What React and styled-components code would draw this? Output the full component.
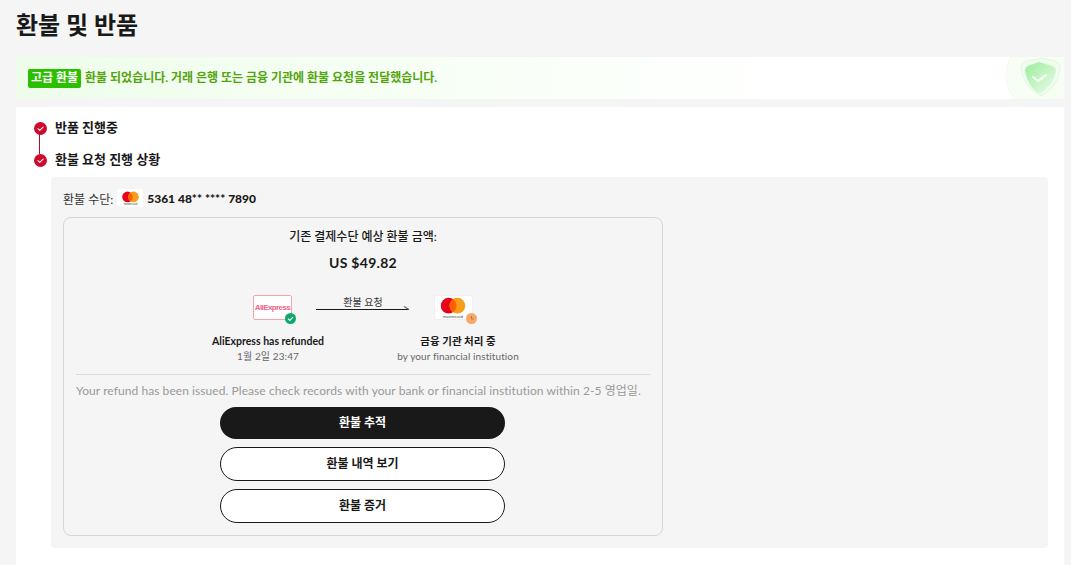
import React from "react";
import styled, { createGlobalStyle } from "styled-components";

const Global = createGlobalStyle`
  html, body { margin: 0; padding: 0; background: #f5f5f5; overflow: hidden; height: 565px; }
  body { font-family: "Lato", "Noto Sans CJK KR", sans-serif; color: #191919; }
  * { box-sizing: border-box; }
`;
const Page = styled.div`
  padding: 0 7px 0 16px;
  height: 565px;
  overflow: hidden;
`;
const Title = styled.h1`
  margin: 0;
  height: 57px;
  padding-top: 8px;
  font-size: 24px;
  line-height: 34px;
  font-weight: 700;
`;
const Banner = styled.div`
  position: relative;
  height: 42px;
  padding-left: 12px;
  display: flex;
  align-items: center;
  gap: 4px;
  overflow: hidden;
  background: linear-gradient(90deg, #edfdea 0%, #f6fff4 35%, #ffffff 75%, #ffffff 100%);
  font-size: 12px;
  font-weight: 700;
  color: #53a30f;
`;
const Badge = styled.span`
  background: #2bbf00;
  color: #fff;
  border-radius: 2px;
  height: 19px;
  line-height: 17px;
  padding: 0 3px;
  font-size: 12px;
`;
const BannerText = styled.span`
  position: relative;
  top: -2px;
`;
const ShieldWrap = styled.svg`
  position: absolute;
  right: 0;
  top: 0;
  filter: blur(0.4px);
`;
const Card = styled.div`
  margin-top: 8px;
  background: #fff;
  height: 460px;
  padding: 7px 16px 0 18px;
`;
const StepRow = styled.div`
  position: relative;
  display: flex;
  align-items: center;
  gap: 8px;
  height: 24px;
  margin-bottom: 8px;
  font-size: 13px;
  font-weight: 700;
`;
const StepDot = styled.span`
  width: 13px;
  height: 13px;
  display: flex;
  flex: none;
  margin-top: 5px;
`;
const Connector = styled.span`
  position: absolute;
  left: 5px;
  top: 19px;
  width: 1px;
  height: 21px;
  background: #a5122b;
`;
const Panel = styled.div`
  margin: -1px 0 0 17px;
  height: 371px;
  width: 997px;
  background: #f5f5f5;
  border-radius: 4px;
  padding: 12px;
`;
const MethodRow = styled.div`
  display: flex;
  align-items: center;
  height: 18px;
  font-size: 12px;
  color: #333;
  gap: 4px;
`;
const CardNumber = styled.span`
  font-weight: 900;
  font-size: 12px;
  color: #191919;
`;
const CardChip = styled.span`
  width: 26px;
  height: 18px;
  background: #fff;
  border-radius: 2px;
  display: flex;
  align-items: center;
  justify-content: center;
`;
const Box = styled.div`
  margin-top: 10px;
  width: 600px;
  height: 319px;
  border: 1px solid #d6d6d6;
  border-radius: 8px;
  padding: 0 12px;
  display: flex;
  flex-direction: column;
  align-items: center;
`;
const BoxHeading = styled.div`
  margin-top: 10px;
  font-size: 12px;
  line-height: 18px;
  color: #191919;
  font-weight: 500;
`;
const Amount = styled.div`
  margin-top: 7px;
  font-size: 14px;
  line-height: 20px;
  font-weight: 700;
  letter-spacing: 0.3px;
`;
const Flow = styled.div`
  margin: 22px 0 0 144px;
  align-self: flex-start;
  display: flex;
  height: 71px;
`;
const Party = styled.div`
  width: 96px;
  display: flex;
  flex-direction: column;
  align-items: center;
`;
const LogoBox = styled.div`
  position: relative;
  width: 39px;
  height: 25px;
  margin-left: ${(p) => p.$shift}px;
  background: #fff;
  border-radius: 2px;
  border: 1px solid ${(p) => p.$edge};
  display: flex;
  align-items: center;
  justify-content: center;
`;
const AliText = styled.span`
  font-family: "Liberation Sans", sans-serif;
  font-size: 8px;
  letter-spacing: -0.6px;
  color: #f0638a;
  font-weight: 700;
`;
const StatusBadge = styled.span`
  position: absolute;
  right: -5px;
  bottom: -5px;
  width: 11px;
  height: 11px;
  display: flex;
`;
const PartyName = styled.div`
  margin-top: 14px;
  font-size: 10.5px;
  line-height: 14px;
  font-weight: 700;
  white-space: nowrap;
`;
const PartyNote = styled.div`
  margin-top: 1px;
  font-size: 10px;
  line-height: 14px;
  color: #666;
  white-space: nowrap;
  letter-spacing: 0.1px;
`;
const Arrow = styled.div`
  width: 94px;
  margin-top: 1px;
  display: flex;
  flex-direction: column;
  align-items: center;
  font-size: 10px;
  line-height: 12px;
  color: #333;
`;
const ArrowGlyph = styled.svg`
  display: block;
  margin-top: -2px;
`;
const Divider = styled.div`
  width: 100%;
  height: 1px;
  background: #dcdcdc;
  margin-top: 8px;
`;
const Note = styled.div`
  width: 100%;
  margin-top: 8px;
  font-size: 12px;
  line-height: 16px;
  color: #999;
  white-space: nowrap;
  letter-spacing: 0.065px;
`;
const Btn = styled.div`
  width: 285px;
  height: ${(p) => (p.$primary ? 32 : 34)}px;
  margin: 8px 0 0 144px;
  padding-bottom: 4px;
  align-self: flex-start;
  border-radius: 17px;
  background: ${(p) => (p.$primary ? "#191919" : "#fff")};
  color: ${(p) => (p.$primary ? "#fff" : "#191919")};
  border: ${(p) => (p.$primary ? "none" : "1px solid #191919")};
  display: flex;
  align-items: center;
  justify-content: center;
  font-size: 12px;
  font-weight: 700;
`;

const Check = () => (
  <svg width="13" height="13" viewBox="0 0 14 14">
    <circle cx="7" cy="7" r="7" fill="#cf0a2c" />
    <path d="M4.2 7.2 L6.2 9 L9.8 5.4" fill="none" stroke="#fff" strokeWidth="1.1" strokeLinecap="round" strokeLinejoin="round" />
  </svg>
);
const Master = ({ w }) => (
  <svg width={w} height={w * 0.78} viewBox="0 0 32 25">
    <circle cx="11" cy="10" r="9" fill="#eb001b" />
    <circle cx="21" cy="10" r="9" fill="#f79e1b" />
    <path d="M16 2.5 a9 9 0 0 1 0 15 a9 9 0 0 1 0 -15" fill="#ff5f00" />
    <text x="16" y="24" textAnchor="middle" fontSize="4.6" fill="#444" fontFamily="Liberation Sans, sans-serif">mastercard</text>
  </svg>
);

export default function App() {
  return (
    <Page>
      <Global />
      <Title>환불 및 반품</Title>
      <Banner>
        <Badge>고급 환불</Badge>
        <BannerText>환불 되었습니다. 거래 은행 또는 금융 기관에 환불 요청을 전달했습니다.</BannerText>
        <ShieldWrap width="58" height="42" viewBox="0 0 58 42">
          <defs>
            <linearGradient id="sh" x1="0.15" y1="0.1" x2="0.85" y2="0.9">
              <stop offset="0" stopColor="#a4eea6" />
              <stop offset="1" stopColor="#e4fae2" />
            </linearGradient>
          </defs>
          <circle cx="38" cy="18" r="38" fill="#f7fff5" stroke="#eefbec" />
          <path d="M35 1 L49 4 Q54 6 54 12 Q52 30 35 39 Q18 30 15 12 Q15 6 21 4 Z" fill="#f0fcee" stroke="#e2f7e0" />
          <path d="M33 5 L46 9 Q50 10 50 14 Q47 30 33 37 Q22 30 19 14 Q19 10 22 9 Z" fill="url(#sh)" />
          <path d="M27 20 L32 24 L40 18" fill="none" stroke="#f6fff4" strokeWidth="2.2" strokeLinecap="round" strokeLinejoin="round" />
        </ShieldWrap>
      </Banner>
      <Card>
        <StepRow>
          <StepDot><Check /></StepDot>
          <span>반품 진행중</span>
          <Connector />
        </StepRow>
        <StepRow>
          <StepDot><Check /></StepDot>
          <span>환불 요청 진행 상황</span>
        </StepRow>
        <Panel>
          <MethodRow>
            <span>환불 수단:</span>
            <CardChip><Master w={19} /></CardChip>
            <CardNumber>5361 48** **** 7890</CardNumber>
          </MethodRow>
          <Box>
            <BoxHeading>기존 결제수단 예상 환불 금액:</BoxHeading>
            <Amount>US $49.82</Amount>
            <Flow>
              <Party>
                <LogoBox $edge="#f5a3ad" $shift={9}>
                  <AliText>AliExpress</AliText>
                  <StatusBadge>
                    <svg width="11" height="11" viewBox="0 0 11 11">
                      <circle cx="5.5" cy="5.5" r="5.5" fill="#0ea86b" />
                      <path d="M3 5.6 L4.9 7.4 L8 4" fill="none" stroke="#fff" strokeWidth="1.1" />
                    </svg>
                  </StatusBadge>
                </LogoBox>
                <PartyName>AliExpress has refunded</PartyName>
                <PartyNote>1월 2일 23:47</PartyNote>
              </Party>
              <Arrow>
                <span>환불 요청</span>
                <ArrowGlyph width="94" height="6" viewBox="0 0 94 6">
                  <path d="M0 3.5 H93" stroke="#191919" strokeWidth="1" />
                  <path d="M88 0.5 L93 3.5" stroke="#666" strokeWidth="1.2" />
                </ArrowGlyph>
              </Arrow>
              <Party>
                <LogoBox $edge="#f0f0f0" $shift={-10}>
                  <Master w={28} />
                  <StatusBadge>
                    <svg width="11" height="11" viewBox="0 0 11 11">
                      <circle cx="5.5" cy="5.5" r="5.5" fill="#f5a76c" />
                      <path d="M5.5 3 V6 H7.5" fill="none" stroke="#c96a24" strokeWidth="0.9" />
                    </svg>
                  </StatusBadge>
                </LogoBox>
                <PartyName>금융 기관 처리 중</PartyName>
                <PartyNote>by your financial institution</PartyNote>
              </Party>
            </Flow>
            <Divider />
            <Note>Your refund has been issued. Please check records with your bank or financial institution within 2-5 영업일.</Note>
            <Btn $primary>환불 추적</Btn>
            <Btn>환불 내역 보기</Btn>
            <Btn>환불 증거</Btn>
          </Box>
        </Panel>
      </Card>
    </Page>
  );
}
